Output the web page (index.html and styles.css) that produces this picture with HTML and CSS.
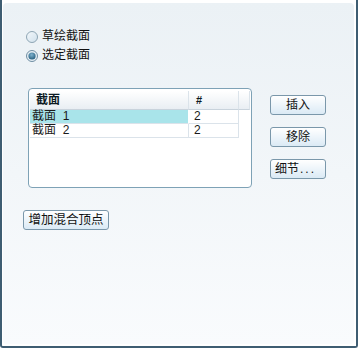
FILE: index.html
```html
<!DOCTYPE html>
<html>
<head>
<meta charset="utf-8">
<link rel="stylesheet" href="styles.css">
</head>
<body>
<div class="frame">
  <div class="panel">
    <div class="radios">
      <label class="radio">
        <svg class="rb" width="12" height="12" viewBox="0 0 12 12">
          <defs>
            <linearGradient id="g1" x1="0" y1="0" x2="1" y2="1">
              <stop offset="0" stop-color="#f4f8fb"/>
              <stop offset="1" stop-color="#cfe0ec"/>
            </linearGradient>
          </defs>
          <circle cx="6" cy="6" r="5.5" fill="url(#g1)" stroke="#8ea5b4" stroke-width="1"/>
        </svg>
        <span>草绘截面</span>
      </label>
      <label class="radio">
        <svg class="rb" width="12" height="12" viewBox="0 0 12 12">
          <defs>
            <radialGradient id="g2" cx="0.45" cy="0.35" r="0.7">
              <stop offset="0" stop-color="#7fb3cf"/>
              <stop offset="1" stop-color="#1f5878"/>
            </radialGradient>
          </defs>
          <circle cx="6" cy="6" r="5.5" fill="#e6eff5" stroke="#6f8ea2" stroke-width="1"/>
          <circle cx="6" cy="6" r="3.6" fill="url(#g2)"/>
        </svg>
        <span>选定截面</span>
      </label>
    </div>

    <div class="middle">
      <div class="tablebox">
        <div class="grid">
          <div class="hcell c1 bold">截面</div>
          <div class="hcell c2 bold">#</div>
          <div class="hcell c3"></div>
          <div class="cell c1 sel">截面 &nbsp;1</div>
          <div class="cell c2">2</div>
          <div class="cell c3 empty"></div>
          <div class="cell c1">截面 &nbsp;2</div>
          <div class="cell c2">2</div>
          <div class="cell c3 empty"></div>
        </div>
      </div>
      <div class="buttons">
        <button class="btn">插入</button>
        <button class="btn">移除</button>
        <button class="btn left">细节<span class="dots">...</span></button>
      </div>
    </div>

    <button class="btn wide">增加混合顶点</button>
  </div>
</div>
</body>
</html>
```

FILE: styles.css
```css
html, body {
  margin: 0;
  padding: 0;
  background: #ffffff;
}
body {
  width: 358px;
  height: 348px;
  overflow: hidden;
  font-family: "Liberation Sans", "Noto Sans CJK SC", sans-serif;
  font-size: 12px;
  color: #111;
}
.frame {
  box-sizing: border-box;
  width: 358px;
  height: 348px;
  padding: 3px 2px 2px 1px;
  border-left: 2px solid #3e5d72;
  border-right: 2px solid #3e5d72;
  border-bottom: 2px solid #3e5d72;
  border-bottom-left-radius: 3px;
  border-bottom-right-radius: 3px;
}
.panel {
  box-sizing: border-box;
  height: 100%;
  border-radius: 4px;
  background: linear-gradient(#ebf1f5, #f9fbfd);
  padding: 24px 0 0 20px;
  display: flex;
  flex-direction: column;
  align-items: flex-start;
}
.radios {
  display: flex;
  flex-direction: column;
  margin-left: 3px;
}
.radio {
  display: flex;
  align-items: center;
  gap: 4px;
  height: 19px;
  line-height: 19px;
}
.rb {
  display: block;
  flex: none;
}
.middle {
  display: flex;
  align-items: flex-start;
  margin-top: 23px;
  margin-left: 5px;
}
.tablebox {
  box-sizing: border-box;
  width: 224px;
  height: 100px;
  border: 1px solid #7ea2b6;
  border-radius: 4px;
  background: #ffffff;
  padding: 2px 0 0 1px;
}
.grid {
  display: grid;
  grid-template-columns: 159px 50px 11px;
  grid-template-rows: 19px 14px 14px;
}
.hcell {
  box-sizing: border-box;
  background: linear-gradient(#ffffff, #e9eef3);
  border-bottom: 1px solid #c9d3dc;
  border-right: 1px solid #dbe3ea;
  line-height: 18px;
  padding-left: 6px;
}
.hcell.c2 {
  padding-left: 7px;
  font-size: 11px;
}
.bold {
  font-weight: bold;
  color: #0c1a24;
}
.cell {
  box-sizing: border-box;
  border-bottom: 1px solid #dbe3ea;
  border-right: 1px solid #dbe3ea;
  line-height: 13px;
  padding-left: 2px;
  color: #1a1a1a;
}
.cell.c2 {
  padding-left: 5px;
}
.cell.empty {
  border: none;
}
.sel {
  background: #a9e4ea;
  border-right-color: #ffffff;
}
.buttons {
  display: flex;
  flex-direction: column;
  gap: 12px;
  margin-left: 18px;
  margin-top: 7px;
}
.btn {
  box-sizing: border-box;
  width: 56px;
  height: 20px;
  padding: 0;
  border: 1px solid #7a97aa;
  border-radius: 3px;
  background: linear-gradient(#ffffff, #dbeaf5);
  font-family: "Liberation Sans", "Noto Sans CJK SC", sans-serif;
  font-size: 12px;
  color: #111;
  line-height: 18px;
  text-align: center;
}
.btn.left {
  text-align: left;
  padding-left: 4px;
}
.dots {
  letter-spacing: 2px;
  margin-left: 1px;
}
.btn.wide {
  width: 86px;
  margin-top: 22px;
  font-size: 12.5px;
}
```
